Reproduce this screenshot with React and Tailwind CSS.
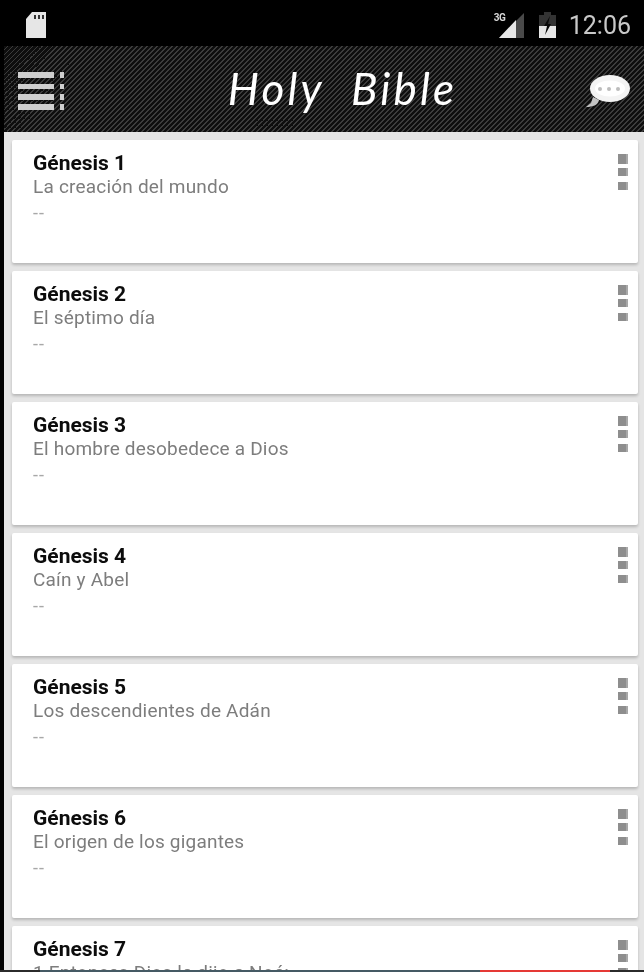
const items = [
  ["Génesis 1", "La creación del mundo"],
  ["Génesis 2", "El séptimo día"],
  ["Génesis 3", "El hombre desobedece a Dios"],
  ["Génesis 4", "Caín y Abel"],
  ["Génesis 5", "Los descendientes de Adán"],
  ["Génesis 6", "El origen de los gigantes"],
  ["Génesis 7", "1 Entonces Dios le dijo a Noé:"],
];

function Dots() {
  return (
    <div className="flex flex-col pt-[14px] pr-[10px]">
      <div className="w-[10px] h-[10px] bg-[#8e8e8e] border-r-2 border-[#a8a8a8]" />
      <div className="w-[10px] h-[8px] mt-[4px] bg-[#8e8e8e] border-r-2 border-[#a8a8a8]" />
      <div className="w-[10px] h-[8px] mt-[6px] bg-[#8e8e8e] border-r-2 border-[#a8a8a8]" />
    </div>
  );
}

function Card({ title, sub }) {
  return (
    <div className="h-[123px] shrink-0 bg-white rounded-[2px] shadow-[0_2px_3px_rgba(0,0,0,0.2)] flex justify-between pl-[21px] font-['Roboto',sans-serif]">
      <div className="pt-[10px] blur-[0.4px]">
        <div className="text-[21px] leading-[26px] font-bold text-[#0c0c0c]">{title}</div>
        <div className="text-[19px] leading-[22px] text-[#7d7d7d] tracking-[0.2px]">{sub}</div>
        <div className="text-[18px] leading-[30px] tracking-[1px] text-[#a8a8a8]">--</div>
      </div>
      <Dots />
    </div>
  );
}

function StatusBar() {
  return (
    <div className="h-[46px] shrink-0 bg-black flex items-center pl-[22px] pr-[13px]">
      <svg width="20" height="26" viewBox="0 0 20 26" className="mt-[4px] blur-[0.3px]">
        <path d="M6 0H20V26H0V7Z" fill="#e6e6e6" />
        <rect x="8" y="3" width="2" height="4" fill="#333" />
        <rect x="12" y="3" width="2" height="4" fill="#333" />
        <rect x="16" y="3" width="2" height="4" fill="#333" />
      </svg>
      <div className="flex-1" />
      <div className="relative w-[30px] h-[26px] mt-[3px]">
        <svg width="25" height="25" viewBox="0 0 25 25" className="absolute left-[5px] top-[1px]">
          <path d="M25 0V25H0Z" fill="#4a4a4a" />
          <path d="M17 7V25H0Z" fill="#e6e6e6" />
        </svg>
        <span className="absolute left-0 top-[1px] text-[10px] leading-[10px] font-bold text-[#d8d8d8] font-['Roboto',sans-serif] tracking-[-0.5px] blur-[0.3px]">3G</span>
      </div>
      <svg width="17" height="26" viewBox="0 0 17 26" className="ml-[15px] mt-[3px] blur-[0.3px]">
        <path d="M5 0H12V3H17V26H0V3H5Z" fill="#333" />
        <path d="M0 14H17V26H0Z" fill="#e6e6e6" />
        <path d="M11 4L5 14H8L6 23L12 12H9Z" fill="#0a0a0a" />
      </svg>
      <span className="ml-[13px] text-[25px] leading-none text-[#c8c8c8] font-['Roboto',sans-serif] blur-[0.4px] mt-[4px]">12:06</span>
    </div>
  );
}

function MenuIcon() {
  const rows = ["h-[6px]", "h-[5px] mt-[6px]", "h-[6px] mt-[5px]", "h-[6px] mt-[4px]"];
  return (
    <div className="flex flex-col">
      {rows.map((r, i) => (
        <div key={i} className={"flex gap-[6px] " + r}>
          <div className="w-[36px] bg-[#cfcfcf]" />
          <div className="w-[4px] bg-[#cfcfcf]" />
        </div>
      ))}
    </div>
  );
}

function Bubble() {
  return (
    <svg width="45" height="34" viewBox="0 0 45 34" className="blur-[0.5px]">
      <path d="M1 33C8 33 13 31 14 26L8 23L6 29Z" fill="#c4c4c4" />
      <ellipse cx="25" cy="14.5" rx="20" ry="13.5" fill="#f4f4f4" />
      <ellipse cx="25" cy="14.5" rx="15" ry="8" fill="#fff" />
      <circle cx="15" cy="15" r="2" fill="#bcbcbc" />
      <circle cx="24" cy="15" r="2" fill="#bcbcbc" />
      <circle cx="33" cy="15" r="2" fill="#bcbcbc" />
    </svg>
  );
}

function Header() {
  return (
    <div className="h-[86px] shrink-0 flex items-center justify-between pl-[14px] pr-[14px] bg-[repeating-linear-gradient(135deg,#0e0e0e_0px,#0e0e0e_2.12132px,#3c3c3c_2.12132px,#3c3c3c_3.53553px)]">
      <div className="mt-[3px]"><MenuIcon /></div>
      <div className="ml-[36px] text-[44px] leading-none italic font-normal tracking-[3.2px] whitespace-pre text-white font-['Lato',sans-serif] mt-[-3px] blur-[0.3px]">Holy  Bible</div>
      <div className="mt-[3px]"><Bubble /></div>
    </div>
  );
}

export default function App() {
  return (
    <div className="relative w-[644px] h-[972px] overflow-hidden flex bg-black">
      <div className="w-[4px] shrink-0 bg-black" />
      <div className="w-[640px] flex flex-col">
        <StatusBar />
        <Header />
        <div className="flex-1 min-h-0 overflow-hidden bg-[#e5e5e5] pt-[8px] pl-[8px] pr-[6px] flex flex-col gap-[8px]">
          {items.map(([t, s]) => <Card key={t} title={t} sub={s} />)}
        </div>
      </div>
      <div className="absolute left-0 right-0 bottom-0 h-[2px] flex">
        <div className="w-[40px] bg-[#2b2b2b]" />
        <div className="w-[440px] bg-[#455a64]" />
        <div className="w-[130px] bg-[#e53935]" />
        <div className="flex-1 bg-[#2b2b2b]" />
      </div>
    </div>
  );
}
